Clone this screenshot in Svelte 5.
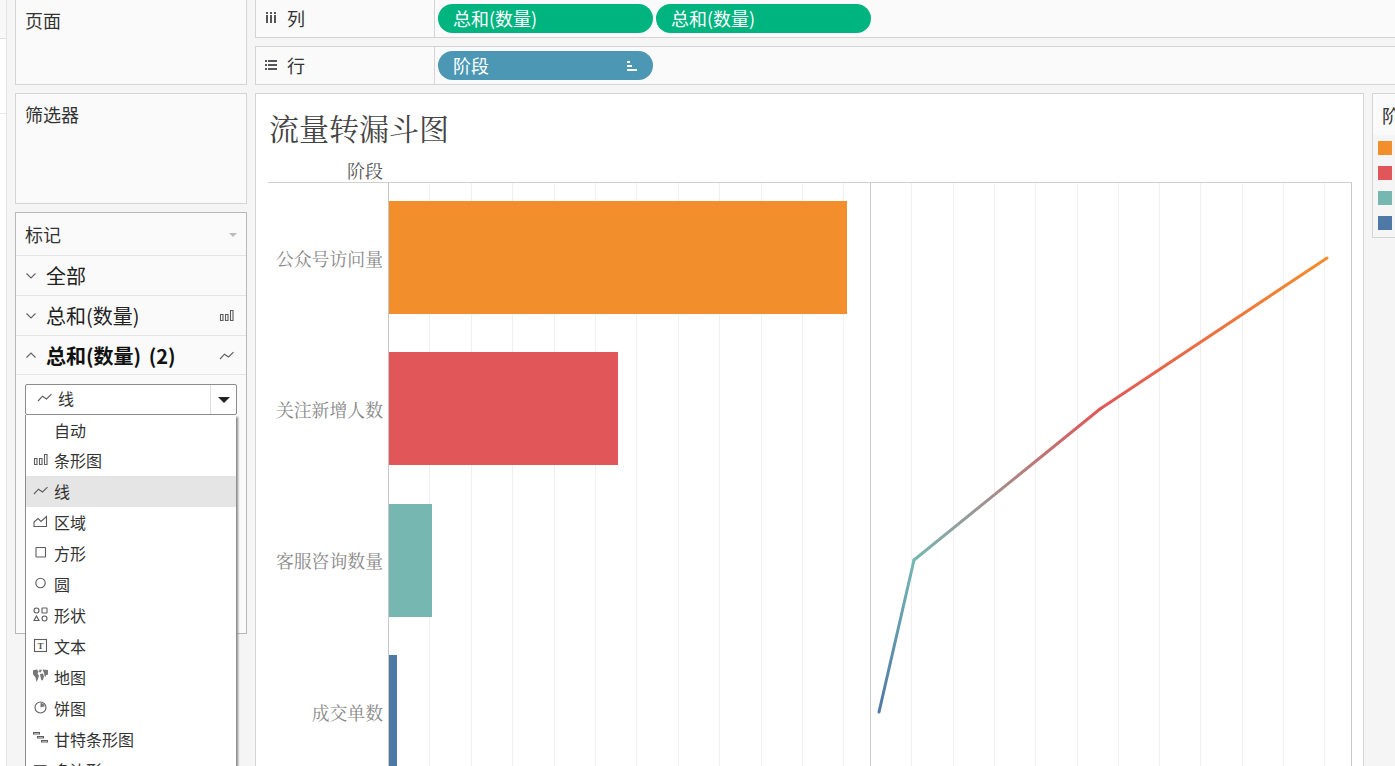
<script>
  const marks = [
    { label: '自动', icon: '' },
    { label: '条形图', icon: 'bar' },
    { label: '线', icon: 'line', active: true },
    { label: '区域', icon: 'area' },
    { label: '方形', icon: 'square' },
    { label: '圆', icon: 'circle' },
    { label: '形状', icon: 'shape' },
    { label: '文本', icon: 'text' },
    { label: '地图', icon: 'map' },
    { label: '饼图', icon: 'pie' },
    { label: '甘特条形图', icon: 'gantt' },
    { label: '多边形', icon: 'polygon' }
  ];
  const stages = [
    { label: '公众号访问量', width: 458, color: '#f28e2b' },
    { label: '关注新增人数', width: 229, color: '#e15759' },
    { label: '客服咨询数量', width: 43, color: '#76b7b2' },
    { label: '成交单数', width: 8, color: '#4e79a7' }
  ];
  const gridX = Array.from({ length: 11 }, (_, i) => Math.floor(41.3 * (i + 1) - 0.5) + 0.5);
  const pts = [
    { x: 8, y: 529, c: '#4e79a7' },
    { x: 43, y: 377, c: '#76b7b2' },
    { x: 229, y: 226, c: '#e15759' },
    { x: 456, y: 75, c: '#f28e2b' }
  ];
  const segs = pts.slice(0, -1).map((p, i) => ({ a: p, b: pts[i + 1], id: 'seg' + i }));
</script>

{#snippet icon(name)}
  <svg class="ico" viewBox="0 0 15 15" width="15" height="15" aria-hidden="true">
    {#if name === 'bar'}
      <path d="M1.500 6.500h2.500v6h-2.500zM6.500 6.500h2.500v6h-2.500zM11.500 2.500h2.500v10h-2.500z" />
    {:else if name === 'line'}
      <path d="M1 11 L5.500 6.200 L9.500 9 L14.500 4.200" />
    {:else if name === 'area'}
      <path d="M1 12.500V8L5 4.500 8 7.500 13.500 2.500V12.500Z" />
    {:else if name === 'square'}
      <rect x="3" y="2.500" width="9.500" height="9.500" rx=".5" />
    {:else if name === 'circle'}
      <circle cx="7.500" cy="7" r="4.700" />
    {:else if name === 'shape'}
      <circle cx="3.500" cy="3.500" r="2.500" />
      <rect x="9" y="1" width="5" height="5" rx=".6" />
      <path d="M3.500 9L6 13.500H1Z" />
      <circle cx="11.500" cy="11.500" r="2.500" />
    {:else if name === 'text'}
      <rect x="1.500" y="1.500" width="12" height="12" />
      <text x="7.500" y="10.500" class="t">T</text>
    {:else if name === 'map'}
      <path class="solid" d="M-1 1.500L4 .5 5.500 2.500 4.500 5 6 6.500 5 10 3.500 13 2.500 8.500-.5 4.500zM6.500 .5L9 1 7.500 3.500 6 3zM7 5L10 4.500 11 7.500 10 11 8.500 11.500 7.500 8zM9.500 .5L16 1 15.500 3.500 14.500 6 13 6 12.500 8 11.500 7 11 4z" />
    {:else if name === 'pie'}
      <circle cx="7.500" cy="7.500" r="5.500" />
      <path class="solid" d="M7.500 7.500V3A4.500 4.500 0 0 1 11.800 6.200Z" />
    {:else if name === 'gantt'}
      <path d="M.5 1.500h6v1.500h-6zM4.500 5.500h6v1.500h-6zM8.500 9.500h6v1.500h-6z" />
    {:else if name === 'polygon'}
      <path d="M1.500 3.500H13L11 12H3Z" />
    {/if}
  </svg>
{/snippet}

{#snippet chevron(up)}
  <svg class="chev" viewBox="0 0 10 6" width="10" height="6" aria-hidden="true">
    <path d={up ? 'M.5 5.500L5 1l4.500 4.500' : 'M.5 .5L5 5l4.500-4.500'} />
  </svg>
{/snippet}

<div class="app">
  <div class="strip">
    <div class="strip-top"></div>
    <div class="strip-mid"></div>
    <div class="strip-end"></div>
  </div>

  <aside class="side">
    <section class="card pages">页面</section>
    <section class="card filters">筛选器</section>
    <section class="card marks">
      <header class="marks-head">
        <span>标记</span>
        <i class="tri-light"></i>
      </header>
      <div class="mrow">
        {@render chevron(false)}
        <span>全部</span>
      </div>
      <div class="mrow">
        {@render chevron(false)}
        <span>总和(数量)</span>
        <span class="mrow-ico">{@render icon('bar')}</span>
      </div>
      <div class="mrow strong">
        {@render chevron(true)}
        <span>总和(数量) (2)</span>
        <span class="mrow-ico">{@render icon('line')}</span>
      </div>
      <div class="select-wrap">
        <div class="select">
          <div class="select-val">{@render icon('line')}<span>线</span></div>
          <div class="select-btn"><i class="tri-dark"></i></div>
        </div>
        <ul class="menu">
          {#each marks as m}
            <li class:active={m.active}>
              <span class="menu-ico">{#if m.icon}{@render icon(m.icon)}{/if}</span>
              <span>{m.label}</span>
            </li>
          {/each}
        </ul>
      </div>
    </section>
  </aside>

  <main class="main">
    <div class="shelf top">
      <div class="shelf-label">
        <svg class="shelf-ico" viewBox="0 0 12 12" width="12" height="12" aria-hidden="true">
          <path d="M1 0h2v2H1zM5 0h2v2H5zM9 0h2v2H9zM1 3h2v8H1zM5 3h2v8H5zM9 3h2v8H9z" />
        </svg>
        <span>列</span>
      </div>
      <div class="pills">
        <div class="pill green">总和(数量)</div>
        <div class="pill green">总和(数量)</div>
      </div>
    </div>
    <div class="shelf">
      <div class="shelf-label">
        <svg class="shelf-ico" viewBox="0 0 12 12" width="12" height="12" aria-hidden="true">
          <path d="M0 1h2v2H0zM3 1h9v2H3zM0 5h2v2H0zM3 5h9v2H3zM0 9h2v2H0zM3 9h9v2H3z" />
        </svg>
        <span>行</span>
      </div>
      <div class="pills">
        <div class="pill blue">
          <span>阶段</span>
          <svg viewBox="0 0 10 10" width="10" height="10" aria-hidden="true">
            <path d="M0 0h3v2H0zM0 4h5v2H0zM0 8h10v2H0z" fill="#fff" />
          </svg>
        </div>
      </div>
    </div>

    <div class="lower">
      <section class="viz">
        <h1>流量转漏斗图</h1>
        <div class="axis-head"><span>阶段</span></div>
        <div class="plot">
          <div class="labels">
            {#each stages as s}
              <div class="lbl">{s.label}</div>
            {/each}
          </div>
          <div class="pane bars">
            {#each stages as s}
              <div class="bar-row">
                <div class="bar" style="width:{s.width}px;background:{s.color}"></div>
              </div>
            {/each}
          </div>
          <svg class="pane lines" width="480" height="606" viewBox="0 0 480 606" aria-hidden="true">
            <defs>
              {#each segs as s}
                <linearGradient id={s.id} gradientUnits="userSpaceOnUse" x1={s.a.x} y1={s.a.y} x2={s.b.x} y2={s.b.y}>
                  <stop offset="0" stop-color={s.a.c} />
                  <stop offset="1" stop-color={s.b.c} />
                </linearGradient>
              {/each}
            </defs>
            {#each gridX as x}
              <line x1={x} x2={x} y1="0" y2="606" stroke="#f0f0f0" />
            {/each}
            {#each segs as s}
              <line x1={s.a.x} y1={s.a.y} x2={s.b.x} y2={s.b.y} stroke="url(#{s.id})" stroke-width="3" stroke-linecap="round" />
            {/each}
          </svg>
        </div>
      </section>
      <section class="legend">
        <div class="legend-title">阶段</div>
        <div class="swatches">
          {#each stages as s}
            <i style="background:{s.color}"></i>
          {/each}
        </div>
      </section>
    </div>
  </main>
</div>

<style>
  :global(body) { margin: 0; }
  .app {
    display: flex;
    height: 766px;
    width: 1395px;
    overflow: hidden;
    background: #f5f5f5;
    color: #333;
    font-family: "Noto Sans CJK SC", "Liberation Sans", sans-serif;
    font-size: 18px;
  }
  .strip {
    flex: none;
    width: 6px;
    border-right: 1px solid #e4e4e4;
    display: flex;
    flex-direction: column;
    background: #fff;
  }
  .strip-top { height: 38px; background: #f8f8f8; border-bottom: 1px solid #e0e0e0; }
  .strip-mid { height: 74px; border-bottom: 1px solid #e8e8e8; }
  .strip-end { flex: 1; }

  .side {
    flex: none;
    width: 232px;
    margin-left: 8px;
    display: flex;
    flex-direction: column;
    gap: 8px;
  }
  .card {
    box-sizing: border-box;
    background: #fafafa;
    border: 1px solid #d4d4d4;
  }
  .pages { height: 85px; border-top: 0; padding: 7px 9px; line-height: 26px; }
  .filters { height: 111px; padding: 7px 9px; line-height: 26px; }
  .marks {
    height: 422px;
    border-color: #b8b8b8;
    display: flex;
    flex-direction: column;
  }
  .marks-head {
    height: 43px;
    flex: none;
    box-sizing: border-box;
    display: flex;
    align-items: center;
    justify-content: space-between;
    padding: 0 9px;
    border-bottom: 1px solid #e4e4e4;
  }
  .tri-light {
    width: 0; height: 0;
    border-left: 4px solid transparent;
    border-right: 4px solid transparent;
    border-top: 4px solid #bbb;
    margin-top: 1px;
  }
  .mrow {
    height: 40px;
    flex: none;
    box-sizing: border-box;
    display: flex;
    align-items: center;
    padding: 0 12px 0 10px;
    border-bottom: 1px solid #e4e4e4;
    font-size: 20px;
    color: #222;
  }
  .mrow.strong { font-weight: 700; color: #111; height: 39px; word-spacing: 3px; }
  .chev {
    flex: none;
    margin-right: 10px;
    fill: none;
    stroke: #666;
    stroke-width: 1.2;
  }
  .mrow-ico { margin-left: auto; display: flex; }
  .ico { display: block; fill: none; stroke: #5c5c5c; stroke-width: 1.1; }
  .ico .solid { fill: #777; stroke: none; }
  .ico .t { font: 700 9px "Liberation Serif", serif; fill: #555; stroke: none; text-anchor: middle; }

  .select-wrap { position: relative; margin: 9px 9px 0; }
  .select {
    box-sizing: border-box;
    height: 31px;
    display: flex;
    background: #fff;
    border: 1px solid #8c8c8c;
    border-radius: 2px;
    font-size: 16px;
  }
  .select-val { flex: 1; display: flex; align-items: center; gap: 6px; padding: 0 0 4px 11px; }
  .select-btn {
    width: 25px;
    display: flex;
    align-items: center;
    justify-content: center;
    border-left: 1px solid #ddd;
  }
  .tri-dark {
    width: 0; height: 0;
    border-left: 6px solid transparent;
    border-right: 6px solid transparent;
    border-top: 6px solid #222;
  }
  .menu {
    position: absolute;
    left: 0;
    top: 31px;
    width: 211px;
    box-sizing: border-box;
    margin: 0;
    padding: 0;
    list-style: none;
    background: #fff;
    border-left: 1px solid #8c8c8c;
    box-shadow: 2px 2px 2px #8a8a8a;
    font-size: 16px;
    z-index: 2;
  }
  .menu li { box-sizing: border-box; height: 31px; padding-bottom: 2px; display: flex; align-items: center; }
  .menu li:first-child { height: 30px; padding-bottom: 1px; }
  .menu li.active { background: #e5e5e5; }
  .menu-ico { width: 28px; flex: none; display: flex; justify-content: center; }
  .menu-ico :global(svg) { margin-left: 1px; }

  .main { flex: none; width: 1140px; margin-left: 8px; display: flex; flex-direction: column; }
  .shelf {
    box-sizing: border-box;
    height: 39px;
    flex: none;
    margin-bottom: 8px;
    display: flex;
    background: #fafafa;
    border: 1px solid #d4d4d4;
    border-right: 0;
  }
  .shelf.top { height: 38px; border-top: 0; }
  .shelf-label {
    width: 179px;
    flex: none;
    box-sizing: border-box;
    display: flex;
    align-items: center;
    gap: 10px;
    padding: 0 0 1px 9px;
    border-right: 1px solid #d4d4d4;
    font-size: 18px;
  }
  .shelf-ico { fill: #555; }
  .pills { display: flex; align-items: center; gap: 3px; padding-left: 3px; }
  .pill {
    box-sizing: border-box;
    width: 215px;
    height: 29px;
    border-radius: 15px;
    padding: 0 16px 2px 15px;
    display: flex;
    align-items: center;
    justify-content: space-between;
    color: #fff;
    font-size: 18px;
  }
  .pill svg { margin-top: 2px; }
  .green { background: #00b480; }
  .blue { background: #4b97b4; }

  .lower { display: flex; gap: 8px; flex: none; }
  .viz {
    flex: none;
    box-sizing: border-box;
    width: 1109px;
    height: 700px;
    background: #fff;
    border: 1px solid #d4d4d4;
    padding: 0 11px 0 12px;
    font-family: "Noto Serif CJK SC", "Liberation Serif", serif;
  }
  h1 {
    margin: 0;
    padding-left: 1px;
    height: 65px;
    line-height: 66px;
    font-size: 30px;
    font-weight: 400;
    color: #444;
  }
  .axis-head {
    width: 115px;
    height: 23px;
    line-height: 23px;
    text-align: right;
    font-size: 18px;
    color: #555;
  }
  .plot {
    display: flex;
    border-top: 1px solid #d0d0d0;
    height: 606px;
  }
  .labels { width: 120px; flex: none; display: flex; flex-direction: column; }
  .lbl {
    height: 151.3px;
    flex: none;
    display: flex;
    align-items: center;
    justify-content: flex-end;
    padding-right: 5px;
    font-size: 17.85px;
    color: #888;
  }
  .lbl:first-child { height: 150.3px; }
  .pane { flex: none; border-left: 1px solid #c8c8c8; box-sizing: content-box; }
  .bars {
    width: 481px;
    background: repeating-linear-gradient(90deg, transparent 0 40.4px, #f0f0f0 40.4px 41.4px);
  }
  .bar-row {
    box-sizing: border-box;
    height: 151.3px;
    display: flex;
    align-items: center;
  }
  .bar-row:first-child { height: 150.3px; padding-bottom: 1px; }
  .bar { height: 113px; }
  .lines { display: block; border-right: 1px solid #c8c8c8; }

  .legend {
    flex: none;
    box-sizing: border-box;
    width: 120px;
    height: 145px;
    background: #f5f5f5;
    border: 1px solid #d4d4d4;
    overflow: hidden;
  }
  .legend-title {
    height: 41px;
    line-height: 42px;
    padding-left: 9px;
    background: #fafafa;
    font-size: 18px;
  }
  .swatches { display: flex; flex-direction: column; gap: 11px; padding: 6px 0 0 5px; }
  .swatches i { display: block; width: 14px; height: 14px; }
</style>
